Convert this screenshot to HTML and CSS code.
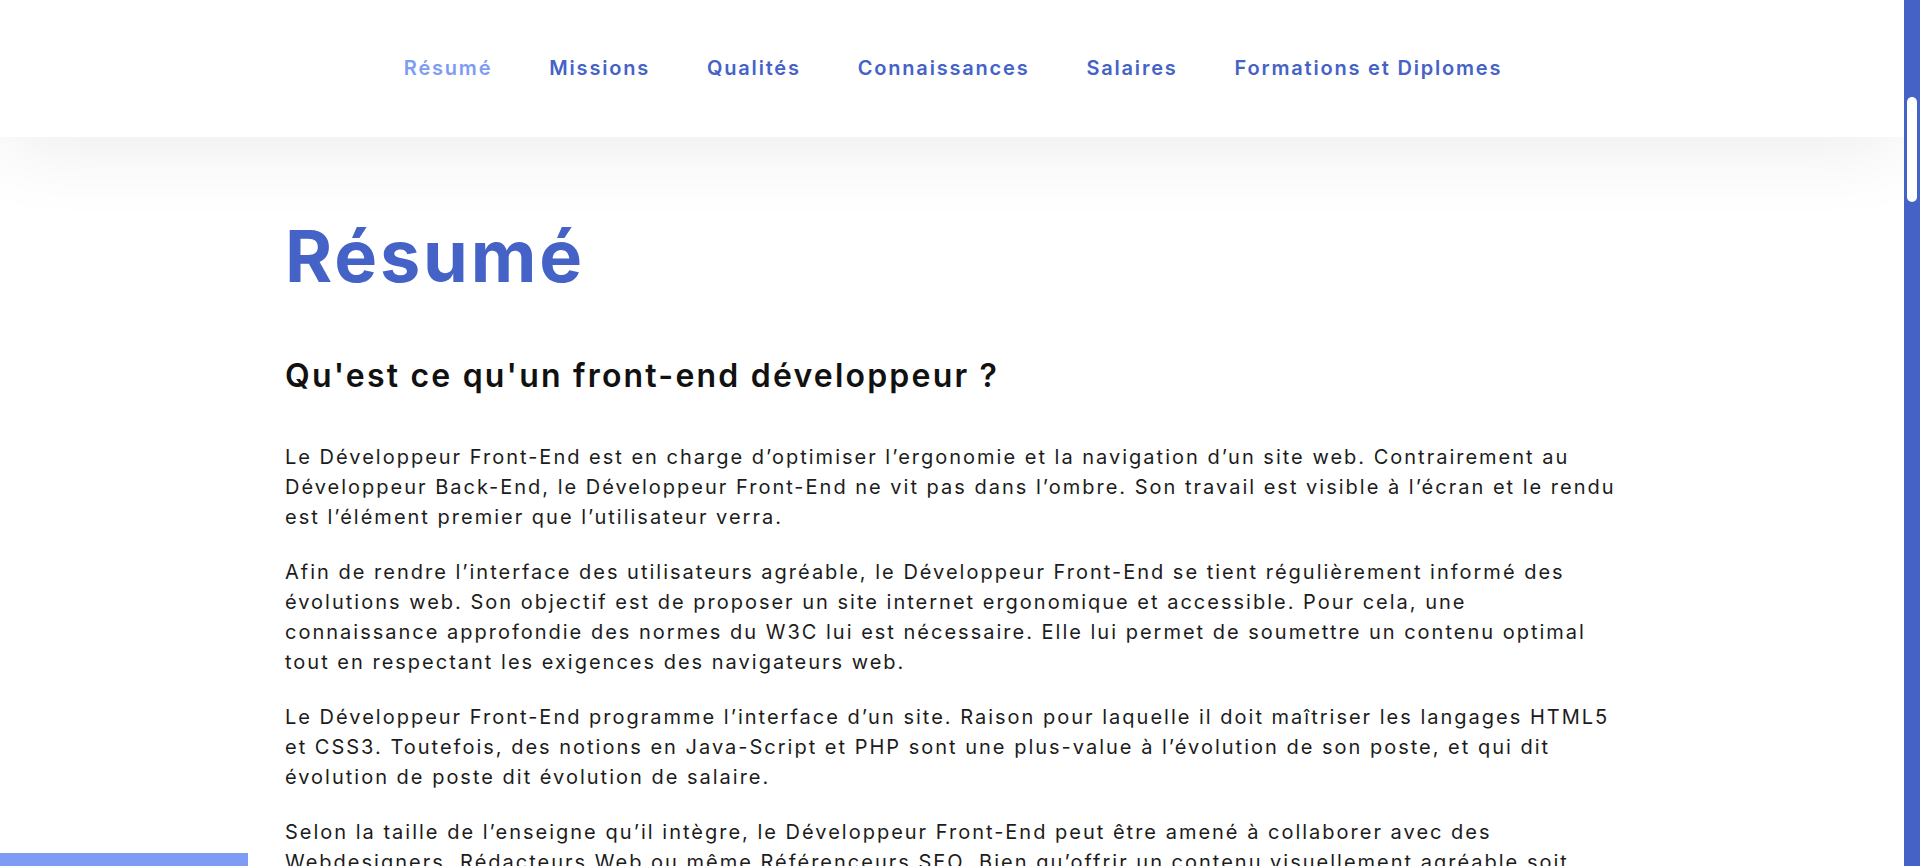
FILE: index.html
```html
<!DOCTYPE html>
<html lang="fr">
<head>
<meta charset="utf-8">
<title>Développeur Front-End</title>
<link rel="stylesheet" href="styles.css">
</head>
<body>
<header class="site-header">
  <nav class="main-nav">
    <a class="nav-link is-active" href="#resume">Résumé</a>
    <a class="nav-link" href="#missions">Missions</a>
    <a class="nav-link" href="#qualites">Qualités</a>
    <a class="nav-link" href="#connaissances">Connaissances</a>
    <a class="nav-link" href="#salaires">Salaires</a>
    <a class="nav-link" href="#formations">Formations et Diplomes</a>
  </nav>
</header>
<main class="content">
  <section class="section" id="resume">
    <h1 class="section-title">Résumé</h1>
    <h2 class="section-subtitle">Qu'est ce qu'un front-end développeur ?</h2>
    <p class="text">Le Développeur Front-End est en charge d’optimiser l’ergonomie et la navigation d’un site web. Contrairement au<br>Développeur Back-End, le Développeur Front-End ne vit pas dans l’ombre. Son travail est visible à l’écran et le rendu<br>est l’élément premier que l’utilisateur verra.</p>
    <p class="text">Afin de rendre l’interface des utilisateurs agréable, le Développeur Front-End se tient régulièrement informé des<br>évolutions web. Son objectif est de proposer un site internet ergonomique et accessible. Pour cela, une<br>connaissance approfondie des normes du W3C lui est nécessaire. Elle lui permet de soumettre un contenu optimal<br>tout en respectant les exigences des navigateurs web.</p>
    <p class="text">Le Développeur Front-End programme l’interface d’un site. Raison pour laquelle il doit maîtriser les langages HTML5<br>et CSS3. Toutefois, des notions en Java-Script et PHP sont une plus-value à l’évolution de son poste, et qui dit<br>évolution de poste dit évolution de salaire.</p>
    <p class="text">Selon la taille de l’enseigne qu’il intègre, le Développeur Front-End peut être amené à collaborer avec des<br>Webdesigners, Rédacteurs Web ou même Référenceurs SEO. Bien qu’offrir un contenu visuellement agréable soit<br>essentiel, il doit aussi veiller à ce que le site soit rapide et bien référencé.</p>
  </section>
</main>
<div class="corner-bar"></div>
<div class="scroll-rail" aria-hidden="true">
  <div class="scroll-thumb"></div>
</div>
</body>
</html>
```
FILE: styles.css
```css
html {
  background: #ffffff;
}

body {
  margin: 0 16px 0 0;
  font-family: Inter, "Noto Sans", sans-serif;
  color: #1c1c1c;
  background: #ffffff;
}

.site-header {
  position: relative;
  z-index: 2;
  height: 137px;
  background: #ffffff;
  box-shadow: 0 10px 80px rgba(0, 0, 0, 0.08);
  display: flex;
  align-items: center;
  justify-content: center;
}

.main-nav {
  display: flex;
  gap: 57px;
  padding-bottom: 2px;
  padding-left: 2px;
}

.nav-link {
  font-size: 20px;
  font-weight: 600;
  letter-spacing: 1.8px;
  color: #4562c7;
  text-decoration: none;
}

.nav-link.is-active {
  color: #7f9cf5;
}

.content {
  max-width: 1334px;
  margin: 0 auto;
  padding-top: 76px;
}

.section-title {
  margin: 0 0 58px;
  font-size: 72px;
  line-height: 1.2;
  font-weight: 700;
  letter-spacing: 2.8px;
  color: #4562c7;
}

.section-subtitle {
  margin: 0 0 46px;
  font-size: 32px;
  line-height: 1.2;
  font-weight: 600;
  letter-spacing: 2.2px;
  color: #111111;
}

.text {
  margin: 0 -24px 25px 0;
  font-size: 20px;
  line-height: 30px;
  letter-spacing: 2px;
}

.corner-bar {
  position: fixed;
  left: 0;
  bottom: 0;
  width: 248px;
  height: 13px;
  background: #7f9cf5;
}

.scroll-rail {
  position: fixed;
  top: 0;
  right: 0;
  width: 16px;
  height: 100%;
  background: #4562c7;
  z-index: 5;
}

.scroll-thumb {
  margin: 97px 0 0 3px;
  width: 10px;
  height: 105px;
  border-radius: 5px;
  background: #ffffff;
}
```
